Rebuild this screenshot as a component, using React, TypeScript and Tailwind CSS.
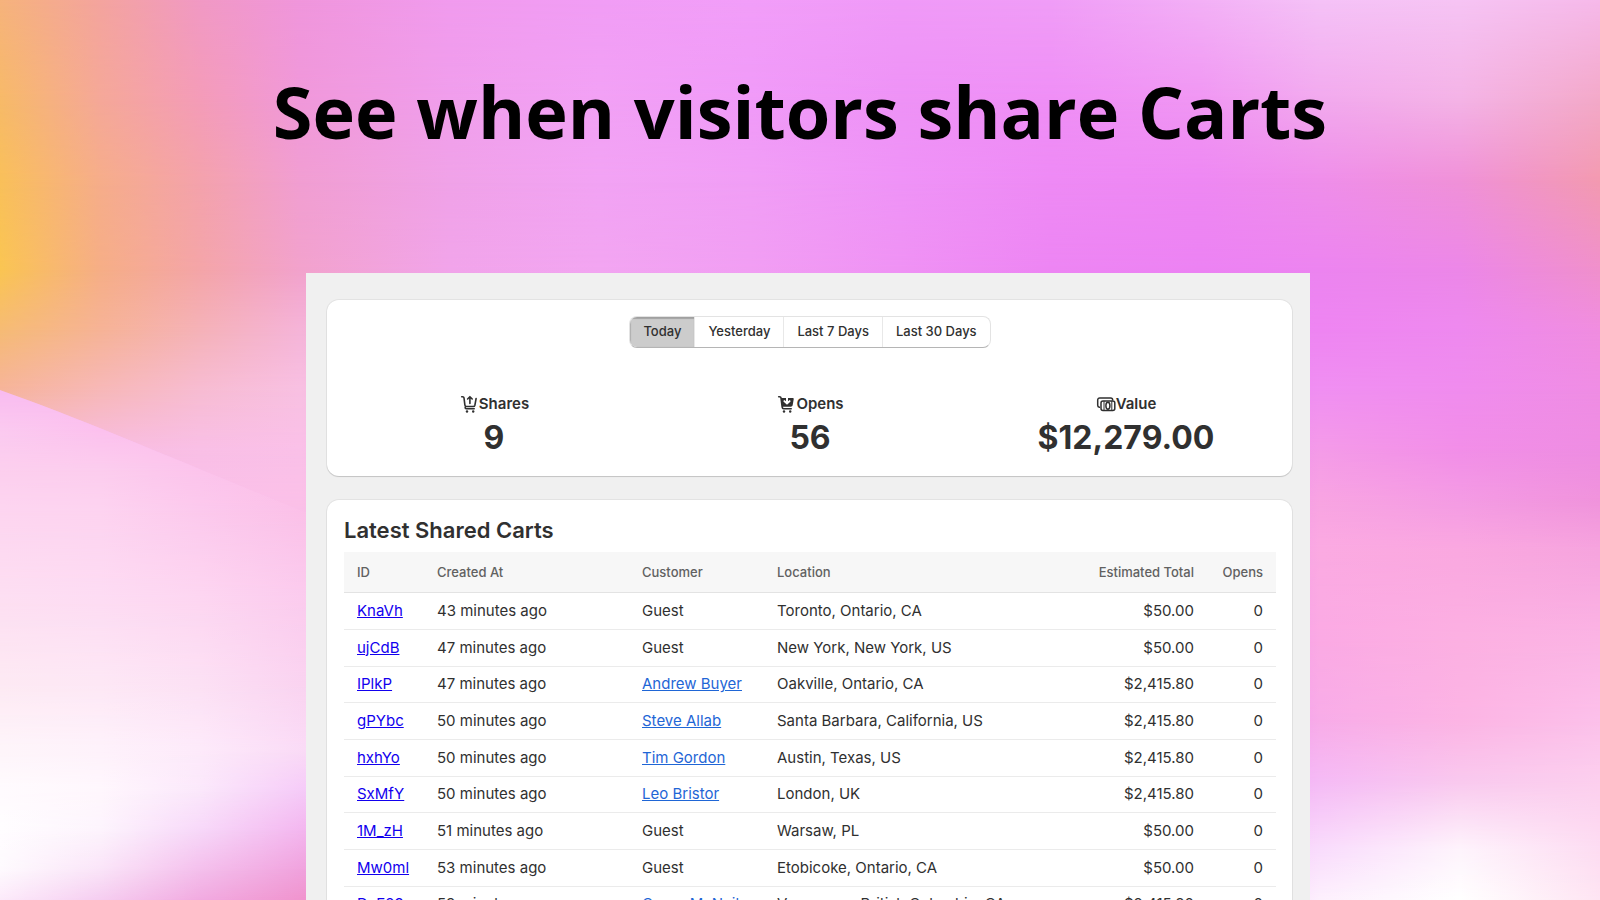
type MeshRow = { y: number; colors: string[] };

const SKY_X = [0, 100, 200, 300, 450, 600, 750, 900, 1050, 1200, 1320, 1460, 1600];

const SKY: MeshRow[] = [
  { y: 0, colors: ['#f6b37c', '#f4a49e', '#f199c4', '#f096dc', '#f19bee', '#f19df5', '#f29ef9', '#f09af8', '#f09df7', '#f3b0f6', '#f5c2f7', '#f6c4f4', '#f6b9ea'] },
  { y: 100, colors: ['#f7ba68', '#f5a898', '#f49cb8', '#f098da', '#f09eec', '#f2a1f5', '#f09af8', '#ee92f6', '#ef8ef6', '#f096f3', '#f2a9ee', '#f4b3e6', '#f3a9c8'] },
  { y: 180, colors: ['#f9c05a', '#f6ad8a', '#f4a2ac', '#f19ed2', '#f0a2e8', '#f2a3f4', '#f19ef6', '#ef93f7', '#ee8af5', '#ee88f3', '#ef8eea', '#f091d8', '#f39ab0'] },
  { y: 270, colors: ['#fac552', '#f6ae86', '#f4a5a8', '#f2a2cc', '#f1a4ea', '#f2a5f1', '#f19ef3', '#ef92f4', '#ed85f3', '#ec82f3', '#ec84f0', '#ec87e8', '#f090cc'] },
  { y: 330, colors: ['#f6bb74', '#f6b396', '#f5b2b8', '#f5b4d8', '#f1a4ea', '#f2a5f1', '#f19ef3', '#ef92f4', '#ed85f3', '#ec82f3', '#ee85f2', '#ee89ef', '#f08de0'] },
  { y: 390, colors: ['#f6b49a', '#f7b8b8', '#f7bcd2', '#f8c0e2', '#f1a4ea', '#f2a5f1', '#f19ef3', '#ef92f4', '#ed85f3', '#ec82f3', '#f08ff2', '#f08cee', '#ef8de4'] },
  { y: 450, colors: ['#f8bcd0', '#f8bce0', '#f9bfe6', '#fac0e8', '#f1a4ea', '#f2a5f1', '#f19ef3', '#ef92f4', '#ed85f3', '#ec82f3', '#f49be8', '#f28ee8', '#ee8de2'] },
  { y: 500, colors: ['#f9c0e6', '#f9c0e8', '#fac0e8', '#fbc0e8', '#f1a4ea', '#f2a5f1', '#f19ef3', '#ef92f4', '#ed85f3', '#ec82f3', '#f8a4e2', '#f49be4', '#f093dc'] },
  { y: 550, colors: ['#f9c0e6', '#f9c0e8', '#fac0e8', '#fbc0e8', '#f1a4ea', '#f2a5f1', '#f19ef3', '#ef92f4', '#ed85f3', '#ec82f3', '#fbaae2', '#faa8e0', '#f6a4de'] },
  { y: 640, colors: ['#f9c0e6', '#f9c0e8', '#fac0e8', '#fbc0e8', '#f1a4ea', '#f2a5f1', '#f19ef3', '#ef92f4', '#ed85f3', '#ec82f3', '#fbaae4', '#fcb0e2', '#fbb4e4'] },
  { y: 720, colors: ['#f9c0e6', '#f9c0e8', '#fac0e8', '#fbc0e8', '#f1a4ea', '#f2a5f1', '#f19ef3', '#ef92f4', '#ed85f3', '#ec82f3', '#f8ace8', '#fcb4e4', '#fcc0ea'] },
  { y: 780, colors: ['#f9c0e6', '#f9c0e8', '#fac0e8', '#fbc0e8', '#f1a4ea', '#f2a5f1', '#f19ef3', '#ef92f4', '#ed85f3', '#f0a0f6', '#f5baf5', '#f9c8ee', '#fccfee'] },
  { y: 850, colors: ['#f9c0e6', '#f9c0e8', '#fac0e8', '#fbc0e8', '#f1a4ea', '#f2a5f1', '#f19ef3', '#ef92f4', '#ed85f3', '#f4c0f8', '#f9dcfc', '#fef4fc', '#fddcf2'] },
  { y: 900, colors: ['#f9c0e6', '#f9c0e8', '#fac0e8', '#fbc0e8', '#f1a4ea', '#f2a5f1', '#f19ef3', '#ef92f4', '#ed85f3', '#f4c0f8', '#fdf0fd', '#ffffff', '#fee4f2'] },
];

const WAVE_X = [0, 100, 200, 310];

const WAVE: MeshRow[] = [
  { y: 390, colors: ['#f9bbf0', '#f9bbf0', '#fabfee', '#fbbfea'] },
  { y: 430, colors: ['#fbcaf0', '#fcc1ee', '#fcc0ec', '#fbc0ea'] },
  { y: 470, colors: ['#fccfee', '#fccdee', '#fcc4ec', '#fbc0e8'] },
  { y: 510, colors: ['#fdd5f0', '#fdd3f0', '#fcc9ed', '#fbc0e8'] },
  { y: 600, colors: ['#fddff2', '#fddcf3', '#fdd6f1', '#fbcbee'] },
  { y: 680, colors: ['#fde9f3', '#fde7f5', '#fce0f4', '#fad2f0'] },
  { y: 750, colors: ['#fef5fa', '#fef2fb', '#fdeafa', '#fadaf6'] },
  { y: 790, colors: ['#fffbfe', '#fff7fd', '#fbe8fb', '#f5c9f8'] },
  { y: 830, colors: ['#fffdff', '#fdf4fd', '#f7d8f9', '#f3b4ee'] },
  { y: 870, colors: ['#fefafe', '#fae4f8', '#f4bfec', '#f0a0dc'] },
  { y: 900, colors: ['#fceafa', '#f5cdf0', '#f1aae0', '#f092cc'] },
];

function Mesh({ id, xs, rows }: { id: string; xs: number[]; rows: MeshRow[] }) {
  const left = xs[0];
  const width = xs[xs.length - 1] - left;

  return (
    <>
      {rows.map((row, i) => {
        // each row fades in over the one above it
        const from = i === 0 ? row.y - 1 : rows[i - 1].y;
        return (
          <g key={row.y}>
            <defs>
              <linearGradient
                id={`${id}-c${i}`}
                gradientUnits="userSpaceOnUse"
                x1={left}
                x2={left + width}
                y1="0"
                y2="0"
              >
                {row.colors.map((color, n) => (
                  <stop key={n} offset={(xs[n] - left) / width} stopColor={color} />
                ))}
              </linearGradient>
              <linearGradient
                id={`${id}-f${i}`}
                gradientUnits="userSpaceOnUse"
                x1="0"
                x2="0"
                y1={from}
                y2={row.y}
              >
                <stop offset="0" stopColor="#fff" stopOpacity="0" />
                <stop offset="1" stopColor="#fff" />
              </linearGradient>
              <mask
                id={`${id}-m${i}`}
                maskUnits="userSpaceOnUse"
                x={left}
                y={from}
                width={width}
                height={900 - from}
              >
                <rect
                  x={left}
                  y={from}
                  width={width}
                  height={900 - from}
                  fill={`url(#${id}-f${i})`}
                />
              </mask>
            </defs>
            <rect
              x={left}
              y={from}
              width={width}
              height={900 - from}
              fill={`url(#${id}-c${i})`}
              mask={`url(#${id}-m${i})`}
            />
          </g>
        );
      })}
    </>
  );
}

function Backdrop() {
  return (
    <svg
      className="pointer-events-none absolute inset-0 size-full"
      viewBox="0 0 1600 900"
      preserveAspectRatio="none"
      aria-hidden="true"
    >
      <Mesh id="sky" xs={SKY_X} rows={SKY} />
      <clipPath id="wave-edge">
        <path d="M0 390C90 422 190 466 310 514V900H0Z" />
      </clipPath>
      <g clipPath="url(#wave-edge)">
        <Mesh id="wave" xs={WAVE_X} rows={WAVE} />
      </g>
    </svg>
  );
}

function CartUpIcon() {
  return (
    <svg className="size-5" viewBox="0 0 20 20" fill="none" aria-hidden="true">
      <path
        d="M2.7 2.7h.9c.8 0 1.300.5 1.400 1.200l.9 7.300c.1.8.7 1.300 1.500 1.300h6.900c.8 0 1.400-.5 1.600-1.300l1.200-6.700M7.200 12.500c-1.400 0-1.400 2.200 0 2.200h8M10.900 9.500V3.200M8.600 5l2.300-2.300L13.200 5"
        stroke="currentColor"
        strokeWidth="1.6"
        strokeLinecap="round"
        strokeLinejoin="round"
      />
      <circle cx="8" cy="17.5" r="1.2" fill="currentColor" />
      <circle cx="14.2" cy="17.5" r="1.2" fill="currentColor" />
    </svg>
  );
}

function CartDownIcon() {
  return (
    <svg className="size-5" viewBox="0 0 20 20" fill="none" aria-hidden="true">
      <path
        d="M2.7 2.7h.9c.8 0 1.300.5 1.400 1.200l1.200 9.300c.1.9.6 1.500 1.400 1.500h7.600"
        stroke="currentColor"
        strokeWidth="1.6"
        strokeLinecap="round"
        strokeLinejoin="round"
      />
      <path
        d="M5 4h5v3.300l-1-.9a.9.9 0 0 0-1.300 1.300l2.700 2.500a.9.9 0 0 0 1.200 0l2.700-2.500a.9.9 0 0 0-1.300-1.300l-1 .9V4h4.700c.7 0 1.100.5 1 1.200l-1 5.800c-.2 1-.9 1.700-1.900 1.700H6.200Z"
        fill="currentColor"
      />
      <circle cx="8" cy="17.5" r="1.2" fill="currentColor" />
      <circle cx="14.2" cy="17.5" r="1.2" fill="currentColor" />
    </svg>
  );
}

function CashIcon() {
  return (
    <svg className="size-5" viewBox="0 0 20 20" fill="none" aria-hidden="true">
      <g stroke="currentColor" strokeWidth="1.5" strokeLinecap="round" strokeLinejoin="round">
        <path d="M3.4 13.3A2 2 0 0 1 1.7 11.3V6a2 2 0 0 1 2-2h11a2 2 0 0 1 2 1.900" />
        <rect x="5" y="7" width="13.8" height="9.5" rx="2" />
        <ellipse cx="11.9" cy="11.75" rx="2" ry="3.400" />
        <path d="M8 7.300v9M15.800 7.300v9" strokeWidth="1" />
      </g>
    </svg>
  );
}

const RANGES = ['Today', 'Yesterday', 'Last 7 Days', 'Last 30 Days'];

const STATS = [
  { label: 'Shares', value: '9', icon: <CartUpIcon /> },
  { label: 'Opens', value: '56', icon: <CartDownIcon /> },
  { label: 'Value', value: '$12,279.00', icon: <CashIcon /> },
];

const CARTS = [
  { id: 'KnaVh', created: '43 minutes ago', customer: 'Guest', location: 'Toronto, Ontario, CA', total: '$50.00' },
  { id: 'ujCdB', created: '47 minutes ago', customer: 'Guest', location: 'New York, New York, US', total: '$50.00' },
  { id: 'IPlkP', created: '47 minutes ago', customer: 'Andrew Buyer', location: 'Oakville, Ontario, CA', total: '$2,415.80' },
  { id: 'gPYbc', created: '50 minutes ago', customer: 'Steve Allab', location: 'Santa Barbara, California, US', total: '$2,415.80' },
  { id: 'hxhYo', created: '50 minutes ago', customer: 'Tim Gordon', location: 'Austin, Texas, US', total: '$2,415.80' },
  { id: 'SxMfY', created: '50 minutes ago', customer: 'Leo Bristor', location: 'London, UK', total: '$2,415.80' },
  { id: '1M_zH', created: '51 minutes ago', customer: 'Guest', location: 'Warsaw, PL', total: '$50.00' },
  { id: 'Mw0ml', created: '53 minutes ago', customer: 'Guest', location: 'Etobicoke, Ontario, CA', total: '$50.00' },
  { id: 'DaE29', created: '53 minutes ago', customer: 'Conor McNeil', location: 'Vancouver, British Columbia, CA', total: '$2,415.80' },
];

const card =
  'rounded-xl bg-white pr-4 pl-[17px] shadow-[0_1px_1px_rgba(0,0,0,0.14),0_0_0_1px_rgba(0,0,0,0.05)]';

function Summary() {
  return (
    <section className={`${card} py-4`}>
      <div className="flex justify-center">
        <div className="flex h-8 overflow-hidden rounded-lg border border-[#e3e3e3] border-b-[#b5b5b5]">
          {RANGES.map((range, i) => (
            <button
              key={range}
              type="button"
              aria-pressed={i === 0}
              className={
                i === 0
                  ? 'bg-[#cccccc] px-3.25 text-[13px] font-medium shadow-[inset_0_2px_1px_rgba(0,0,0,0.2),inset_1px_0_1px_rgba(0,0,0,0.12)]'
                  : 'border-l border-[#e8e8e8] px-3.25 text-[13px] font-medium'
              }
            >
              {range}
            </button>
          ))}
        </div>
      </div>
      <dl className="-mx-2 mt-11 grid grid-cols-3 text-center">
        {STATS.map(stat => (
          <div key={stat.label}>
            <dt className="flex items-center justify-center text-[15px] leading-6 font-semibold">
              {stat.icon}
              {stat.label}
            </dt>
            <dd className="text-[32px] leading-[44px] font-bold">{stat.value}</dd>
          </div>
        ))}
      </dl>
    </section>
  );
}

function LatestCarts() {
  return (
    <section className={`${card} mt-6 py-4`}>
      <h2 className="text-[22px] leading-7 font-semibold">Latest Shared Carts</h2>
      <table className="mt-2 w-full table-fixed text-left text-[15px] leading-5">
        <thead>
          <tr className="h-10 border-b border-[#e3e3e3] bg-[#f7f7f7] text-[13px] text-[#616161]">
            <th className="w-20 px-3.25 font-medium">ID</th>
            <th className="w-[205px] px-3.25 font-medium">Created At</th>
            <th className="w-[135px] px-3.25 font-medium">Customer</th>
            <th className="px-3.25 font-medium">Location</th>
            <th className="w-36 px-3.25 text-right font-medium">Estimated Total</th>
            <th className="w-[69px] px-3.25 text-right font-medium">Opens</th>
          </tr>
        </thead>
        <tbody>
          {CARTS.map(cart => (
            <tr
              key={cart.id}
              className="h-[37px] border-b border-[#ebebeb] whitespace-nowrap nth-[3n]:h-9"
            >
              <td className="px-3.25">
                <a href={`#${cart.id}`} className="text-[#1200ee] underline">
                  {cart.id}
                </a>
              </td>
              <td className="px-3.25">{cart.created}</td>
              <td className="px-3.25">
                {cart.customer === 'Guest' ? (
                  cart.customer
                ) : (
                  <a href="#customer" className="text-[#1f66d6] underline">
                    {cart.customer}
                  </a>
                )}
              </td>
              <td className="px-3.25">{cart.location}</td>
              <td className="px-3.25 text-right">{cart.total}</td>
              <td className="px-3.25 text-right">0</td>
            </tr>
          ))}
        </tbody>
      </table>
    </section>
  );
}

export default function App() {
  return (
    <div className="relative h-screen overflow-hidden font-['Inter',sans-serif] text-[#303030]">
      <Backdrop />
      <div className="relative flex flex-col">
        <h1 className="pt-14 text-center font-['Open_Sans',sans-serif] text-[72px] leading-[110px] font-bold text-black">
          See when visitors share Carts
        </h1>
        <main className="mt-[107px] flex justify-center pl-4">
          <div className="w-full max-w-[1004px] bg-[#f0f0f0] pt-[27px] pr-[18px] pb-6 pl-[21px]">
            <Summary />
            <LatestCarts />
          </div>
        </main>
      </div>
    </div>
  );
}
